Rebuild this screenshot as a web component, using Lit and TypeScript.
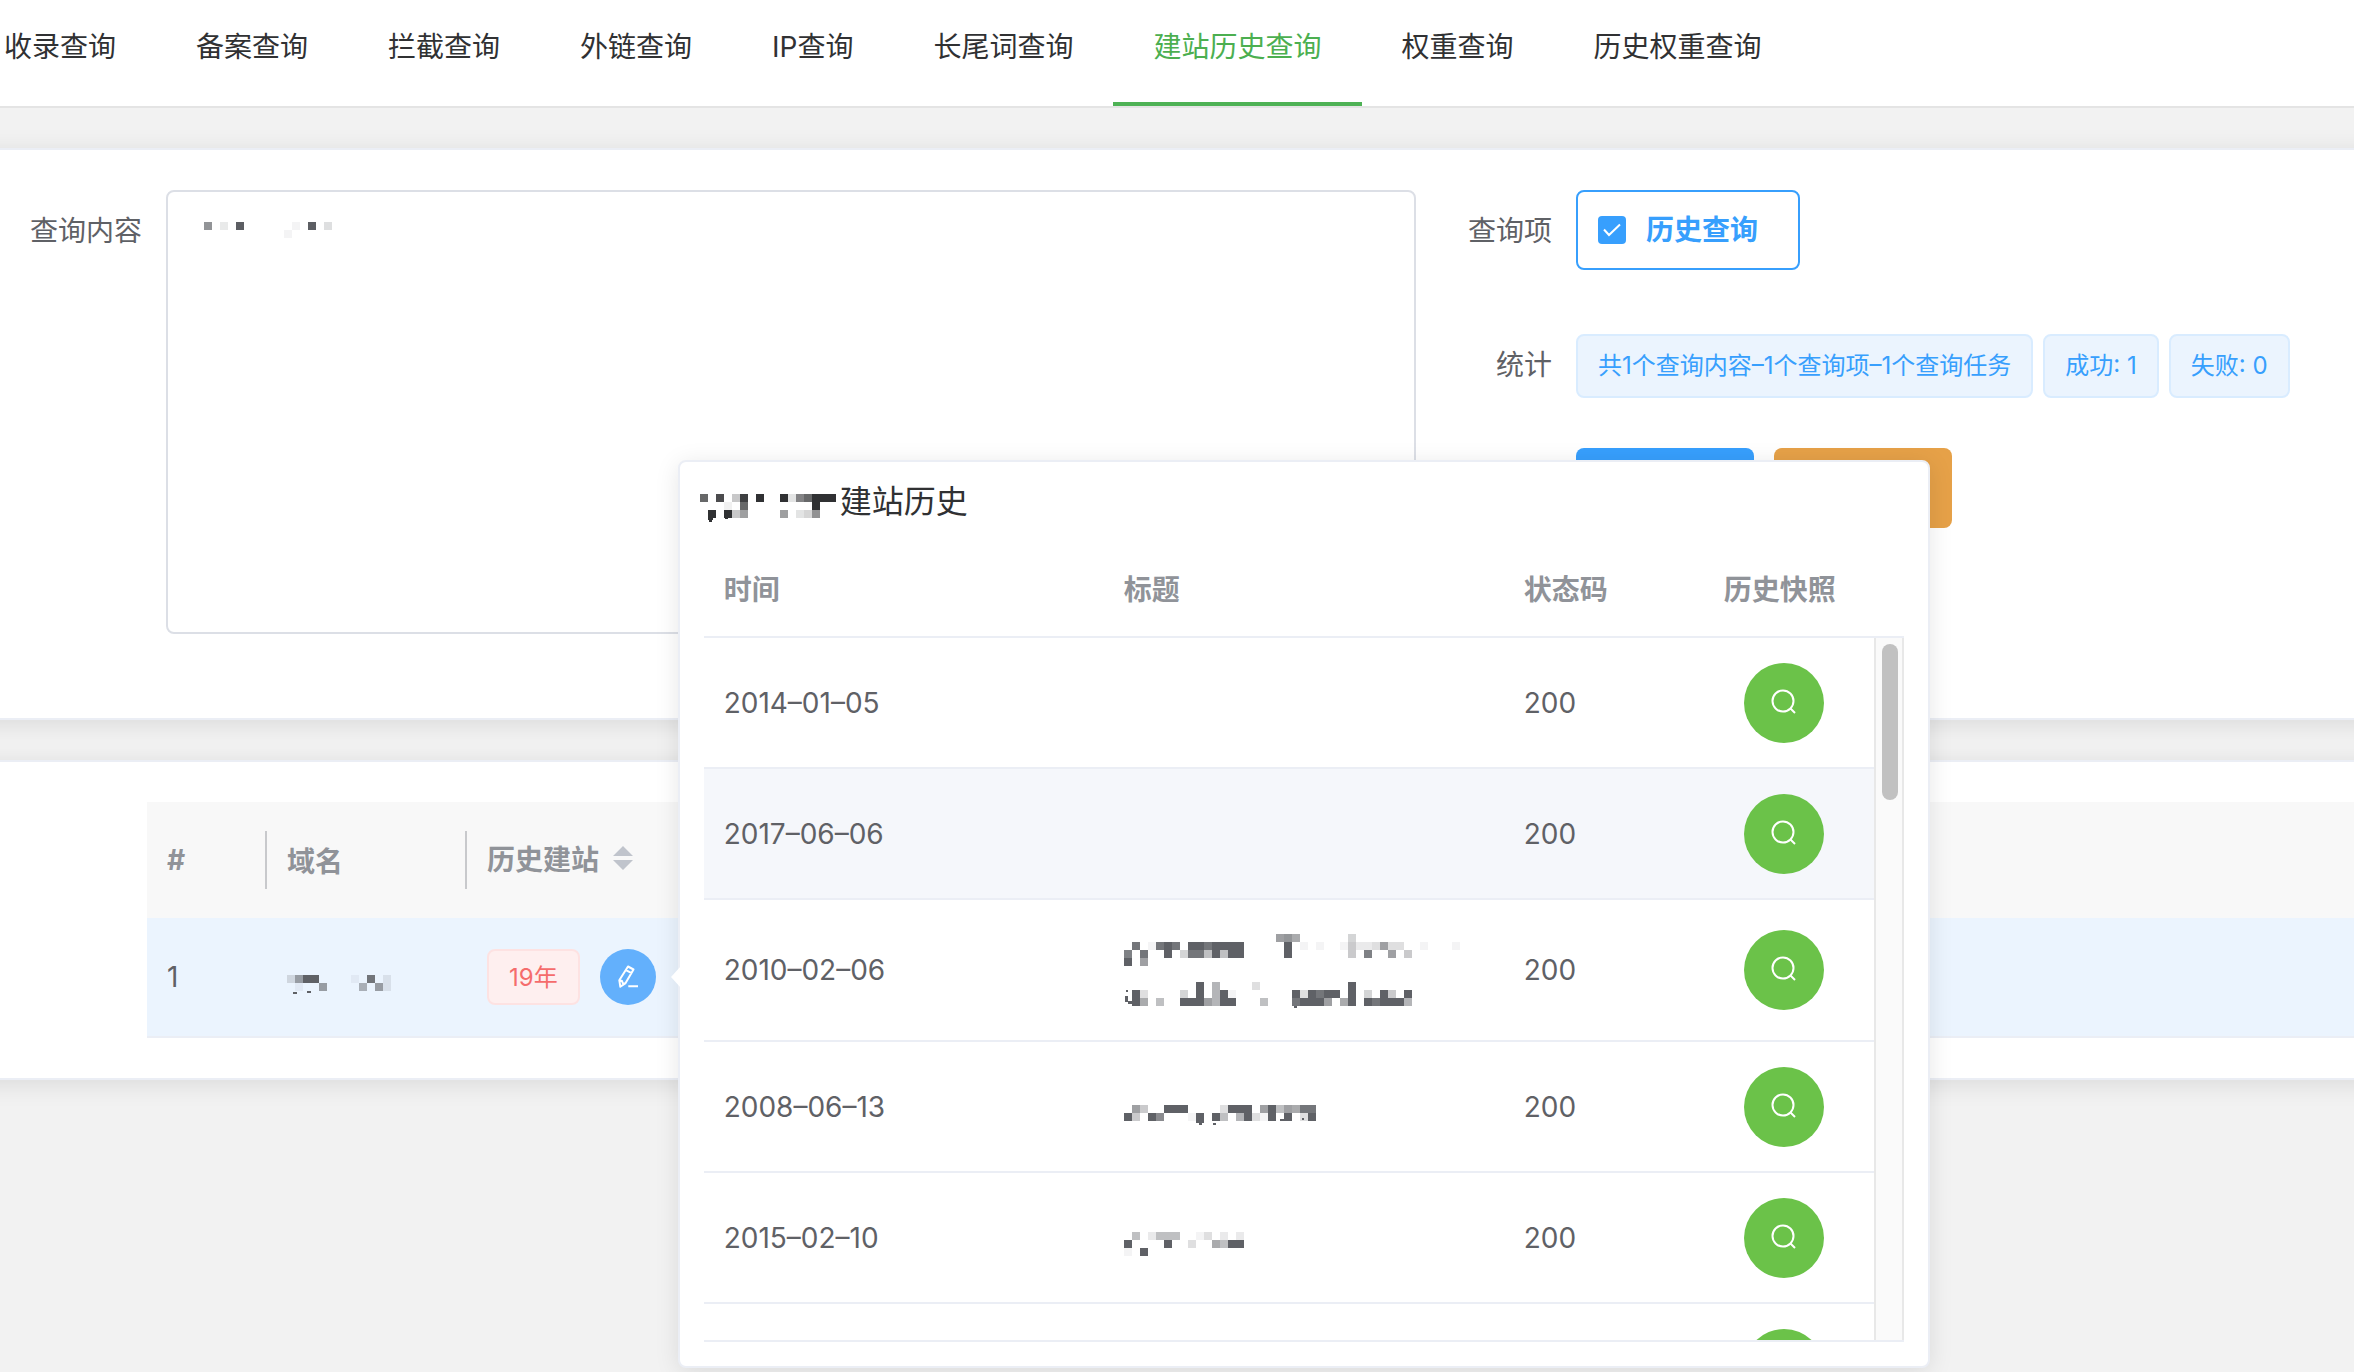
import { LitElement, html, svg, css } from "lit";
import { customElement, property } from "lit/decorators.js";

const CELL = 8;

/** Pixelated stand-in for private text. Each hex digit is the opacity of one cell. */
@customElement("pixel-mask")
class PixelMask extends LitElement {
  @property({ attribute: false }) rows: string[] = [];
  @property({ attribute: false }) specks: number[][] = [];

  static styles = css`
    :host { display: inline-block; flex: none; vertical-align: middle; line-height: 0; }
    .mask { display: block; overflow: visible; fill: currentColor; }
  `;

  render() {
    const width = Math.max(...this.rows.map((r) => r.length)) * CELL;
    const height = this.rows.length * CELL;
    return html`<svg class="mask" width=${width} height=${height} viewBox="0 0 ${width} ${height}"
      shape-rendering="crispEdges" aria-hidden="true">
      ${this.rows.map((row, y) => [...row].map((c, x) => c === "." ? "" : svg`
        <rect x=${x * CELL} y=${y * CELL} width=${CELL} height=${CELL}
          fill-opacity=${parseInt(c, 16) / 15}></rect>`))}
      ${this.specks.map(([x, y, w, h]) => svg`<rect x=${x} y=${y} width=${w} height=${h}></rect>`)}
    </svg>`;
  }
}

interface Snapshot {
  date: string;
  code: string;
  mask?: string[];
  specks?: number[][];
  style?: "hover" | "tall";
}

const SNAPSHOTS: Snapshot[] = [
  { date: "2014–01–05", code: "200" },
  { date: "2017–06–06", code: "200", style: "hover" },
  {
    date: "2010–02–06", code: "200", style: "tall",
    mask: [
      "...................9a8......4",
      ".d.1dfd.ffdffff.....f.1.1..15223933..1...1",
      "c.d..f.4dd6f6ff.....f.......5.c..9.5",
      "f.9",
      "",
      "",
      ".........f.7....3...........f",
      ".f3....4.f.7f1.......f3fdff.f.4.f5.f",
      ".f8.6..fff97ff...6...dfff9.8f.fdfff7",
    ],
    specks: [[2, 56, 2, 2], [1, 62, 3, 6], [4, 67, 4, 3], [170, 72, 3, 2]],
  },
  {
    date: "2008–06–13", code: "200",
    mask: ["", ".95..fff....3fff.9f698dd", "f5.fb...1f.f6.7f31f.f.3f"],
    specks: [[72, 24, 8, 2], [75, 26, 3, 2], [89, 26, 3, 2], [156, 22, 4, 2], [178, 21, 2, 2], [184, 20, 2, 3]],
  },
  {
    date: "2015–02–10", code: "200",
    mask: ["", ".6.2666..13.2.2", "f....f..3..86ff", "1.f"],
  },
  { date: "", code: "" },
];

@customElement("history-popover")
class HistoryPopover extends LitElement {
  static styles = css`
    :host {
      display: block; box-sizing: border-box; width: 1252px; padding: 21px 20px 24px;
      border: 2px solid #ebeef5; border-radius: 8px; background: #fff; color: #5f6166;
      box-shadow: 0 4px 24px rgba(0, 0, 0, 0.1);
    }
    .arrow { position: absolute; left: -9px; top: 504px; width: 10px; height: 22px; fill: #fff; }
    .title {
      display: flex; align-items: center; gap: 4px; margin: 0 0 22px;
      font-size: 32px; line-height: 38px; font-weight: 400; color: #303133;
    }
    .history { margin: 0 4px; border-bottom: 2px solid #ebeef5; }
    .grid { width: 100%; table-layout: fixed; border-collapse: separate; border-spacing: 0; }
    .c-wide { width: 400px; }
    .c-code { width: 200px; }
    .head th {
      height: 92px; padding: 1px 20px 0; border-bottom: 2px solid #ebeef5; text-align: left;
      font-size: 28px; line-height: 46px; font-weight: 700; color: #909399; white-space: nowrap;
    }
    .viewport { display: flex; height: 702px; overflow: hidden; }
    .rows { flex: 1; min-width: 0; }
    .rows td {
      height: 81px; padding: 24px 20px; border-bottom: 2px solid #ebeef5;
      font-size: 28px; line-height: 46px; white-space: nowrap;
    }
    .rows .tall td { height: 92px; }
    .hover td { background: #f5f7fb; }
    .rows .action { padding: 24px 0 24px 40px; }
    .look {
      display: flex; align-items: center; justify-content: center; width: 80px; height: 80px;
      padding: 0; border: 0; border-radius: 50%; background: #6bc249; cursor: pointer;
    }
    .glass { width: 28px; height: 28px; fill: none; stroke: #fff; stroke-width: 2; }
    .track {
      flex: none; box-sizing: border-box; width: 30px; padding: 6px;
      border: solid #e8e8e8; border-width: 0 2px; background: #fafafa;
    }
    .thumb { width: 16px; height: 156px; margin: 0 auto; border-radius: 8px; background: #c1c1c1; }
  `;

  render() {
    return html`
      <svg class="arrow" viewBox="0 0 10 22" aria-hidden="true"><path d="M10 0L0 11l10 11z"></path></svg>
      <h2 class="title">
        <pixel-mask
          .rows=${["", "b.d.4e.f..f29bfff", "...1.b........f", ".f.f47....7.238"]}
          .specks=${[[8, 32, 5, 2], [9, 34, 3, 2], [25, 32, 3, 1]]}></pixel-mask>
        <span>建站历史</span>
      </h2>
      <div class="history">
        <table class="grid head">
          <colgroup><col class="c-wide" /><col class="c-wide" /><col class="c-code" /><col /></colgroup>
          <thead><tr><th>时间</th><th>标题</th><th>状态码</th><th>历史快照</th></tr></thead>
        </table>
        <div class="viewport">
          <div class="rows">
            <table class="grid">
              <colgroup><col class="c-wide" /><col class="c-wide" /><col class="c-code" /><col /></colgroup>
              <tbody>
                ${SNAPSHOTS.map((s) => html`<tr class=${s.style ?? ""}>
                  <td>${s.date}</td>
                  <td>${s.mask ? html`<pixel-mask .rows=${s.mask} .specks=${s.specks ?? []}></pixel-mask>` : ""}</td>
                  <td>${s.code}</td>
                  <td class="action">
                    <button class="look" type="button" aria-label="历史快照">
                      <svg class="glass" viewBox="0 0 28 28"><circle cx="13" cy="12" r="10.5"></circle><path d="M20.5 19.5l4.5 4.5"></path></svg>
                    </button>
                  </td>
                </tr>`)}
              </tbody>
            </table>
          </div>
          <div class="track"><div class="thumb"></div></div>
        </div>
      </div>
    `;
  }
}

const TABS = ["收录查询", "备案查询", "拦截查询", "外链查询", "IP查询", "长尾词查询", "建站历史查询", "权重查询", "历史权重查询"];
const ACTIVE_TAB = "建站历史查询";
const STATS = ["共1个查询内容–1个查询项–1个查询任务", "成功: 1", "失败: 0"];

@customElement("app-root")
class AppRoot extends LitElement {
  static styles = css`
    :host {
      display: block; min-height: 100vh; overflow-x: clip; background: #f2f2f2; color: #5f6166;
      font-family: Inter, "Noto Sans CJK SC", sans-serif; font-size: 28px;
    }
    .tabs {
      display: flex; overflow: hidden; background: #fff; border-bottom: 2px solid #e4e4e4;
    }
    .strip { display: flex; margin-left: -36px; }
    .tab {
      box-sizing: border-box; height: 106px; padding: 0 40px; border-bottom: 4px solid transparent;
      line-height: 94px; color: #303133; text-decoration: none; white-space: nowrap;
    }
    .tab.active { color: #4caf50; border-color: #4eb255; }
    .card {
      margin: 40px -32px 0; padding: 40px 32px; background: #fff;
      border: solid #ebeef5; border-width: 2px 0; box-shadow: 0 4px 24px rgba(0, 0, 0, 0.1);
    }
    .form { display: grid; grid-template-columns: 1416fr 938fr; padding-bottom: 44px; }
    .field { display: flex; align-items: flex-start; }
    .label {
      flex: none; box-sizing: border-box; width: 160px; padding-right: 24px;
      line-height: 82px; height: 80px; text-align: right; white-space: nowrap;
    }
    .label.wide { width: 166px; }
    .input { position: relative; display: flex; flex: 1; }
    .text {
      flex: 1; box-sizing: border-box; height: 444px; padding: 20px 36px; resize: none; outline: 0;
      border: 2px solid #dcdfe6; border-radius: 8px; background: #fff; font: inherit; color: inherit;
    }
    .typed { position: absolute; left: 38px; top: 32px; color: #5c5e63; pointer-events: none; }
    .side { display: flex; flex-direction: column; gap: 44px; }
    .options { padding-bottom: 10px; }
    .option {
      display: flex; align-items: center; gap: 20px; box-sizing: border-box; height: 80px;
      padding: 0 40px 0 20px; border: 2px solid #379ffd; border-radius: 8px;
      color: #379ffd; font-weight: 700; line-height: 40px; cursor: pointer; white-space: nowrap;
    }
    .box { display: grid; width: 28px; height: 28px; }
    .box > * { grid-area: 1 / 1; }
    .check { appearance: none; width: 28px; height: 28px; margin: 0; border-radius: 4px; background: #379ffd; }
    .tick { z-index: 1; width: 28px; height: 28px; fill: none; stroke: #fff; stroke-width: 2; pointer-events: none; }
    .tags { display: flex; align-items: center; gap: 10px; box-sizing: border-box; height: 80px; padding-top: 4px; }
    .tag {
      box-sizing: border-box; height: 64px; padding: 0 20px; border: 2px solid #d9ecff; border-radius: 8px;
      background: #ebf4fe; color: #379ffd; font-size: 24px; line-height: 60px; white-space: nowrap;
    }
    .buttons { display: flex; gap: 20px; padding-left: 160px; }
    .button { width: 178px; height: 80px; border: 0; border-radius: 8px; background: #379ffd; }
    .button.warn { background: #e6a148; }
    .results {
      display: flow-root; padding-left: 147px;
    }
    .table { width: 100%; table-layout: fixed; border-collapse: separate; border-spacing: 0; }
    .c-index { width: 120px; }
    .c-domain { width: 200px; }
    .table th { height: 116px; padding: 0; background: #f8f8f8; color: #909399; font-weight: 700; text-align: left; }
    .cell { display: flex; align-items: center; gap: 14px; box-sizing: border-box; height: 58px; padding-left: 20px; }
    .split { border-right: 2px solid #c8c9cc; }
    .sortable { padding-bottom: 4px; }
    .sort { width: 20px; height: 24px; fill: #c0c4cc; }
    .table td { height: 118px; padding: 0 0 0 20px; border-bottom: 2px solid #ebeef5; background: #ebf4fe; }
    .mark { display: flex; align-items: center; gap: 20px; }
    .tag.age { height: 56px; line-height: 54px; background: #feefef; border-color: #fde2e2; color: #f56c6c; }
    .anchor { position: relative; display: flex; }
    .edit {
      display: flex; align-items: center; justify-content: center; width: 56px; height: 56px;
      padding: 0; border: 0; border-radius: 50%; background: #63b0fc; cursor: pointer;
    }
    .pencil { width: 24px; height: 24px; fill: none; stroke: #fff; stroke-width: 2; stroke-linejoin: round; }
    .popover { position: absolute; left: 78px; top: -489px; z-index: 10; }
  `;

  render() {
    return html`
      <nav class="tabs"><div class="strip">
        ${TABS.map((t) => html`<a class="tab ${t === ACTIVE_TAB ? "active" : ""}" href="#">${t}</a>`)}
      </div></nav>

      <section class="card">
        <form class="form">
          <div class="field">
            <label class="label wide" for="query">查询内容</label>
            <div class="input">
              <textarea class="text" id="query"></textarea>
              <pixel-mask class="typed" .rows=${["a.2.f......1.f.3", "..........1"]}></pixel-mask>
            </div>
          </div>
          <div class="side">
            <div class="field options">
              <span class="label">查询项</span>
              <label class="option">
                <span class="box">
                  <input class="check" type="checkbox" checked />
                  <svg class="tick" viewBox="0 0 28 28" aria-hidden="true"><path d="M6 13.5l5 5.5L22 8.5"></path></svg>
                </span>
                历史查询
              </label>
            </div>
            <div class="field">
              <span class="label">统计</span>
              <div class="tags">${STATS.map((s) => html`<span class="tag">${s}</span>`)}</div>
            </div>
            <div class="buttons">
              <button class="button" type="button" aria-label="查询"></button>
              <button class="button warn" type="button" aria-label="导出"></button>
            </div>
          </div>
        </form>
      </section>

      <section class="card">
        <div class="results">
          <table class="table">
            <colgroup><col class="c-index" /><col class="c-domain" /><col /></colgroup>
            <thead><tr>
              <th><div class="cell split">#</div></th>
              <th><div class="cell split">域名</div></th>
              <th><div class="cell sortable">历史建站
                <svg class="sort" viewBox="0 0 20 24" aria-hidden="true"><path d="M10 0l10 10H0zM10 24L0 14h20z"></path></svg>
              </div></th>
            </tr></thead>
            <tbody><tr>
              <td>1</td>
              <td><pixel-mask .rows=${["", "39ff....1.d.2", ".1..9....7.92"]}
                .specks=${[[6, 25, 4, 2], [20, 24, 4, 2]]}></pixel-mask></td>
              <td><div class="mark">
                <span class="tag age">19年</span>
                <div class="anchor">
                  <button class="edit" type="button" aria-label="建站历史">
                    <svg class="pencil" viewBox="0 0 24 24"><path d="M12 1.5l5.5 3L9.3 18.5l-5 3.2-1-6.5zM10 5.2l5.5 3M3.5 15l2.5 1 .8 2.200 2.500.5M12.300 21.300H22"></path></svg>
                  </button>
                  <history-popover class="popover"></history-popover>
                </div>
              </div></td>
            </tr></tbody>
          </table>
        </div>
      </section>
    `;
  }
}
